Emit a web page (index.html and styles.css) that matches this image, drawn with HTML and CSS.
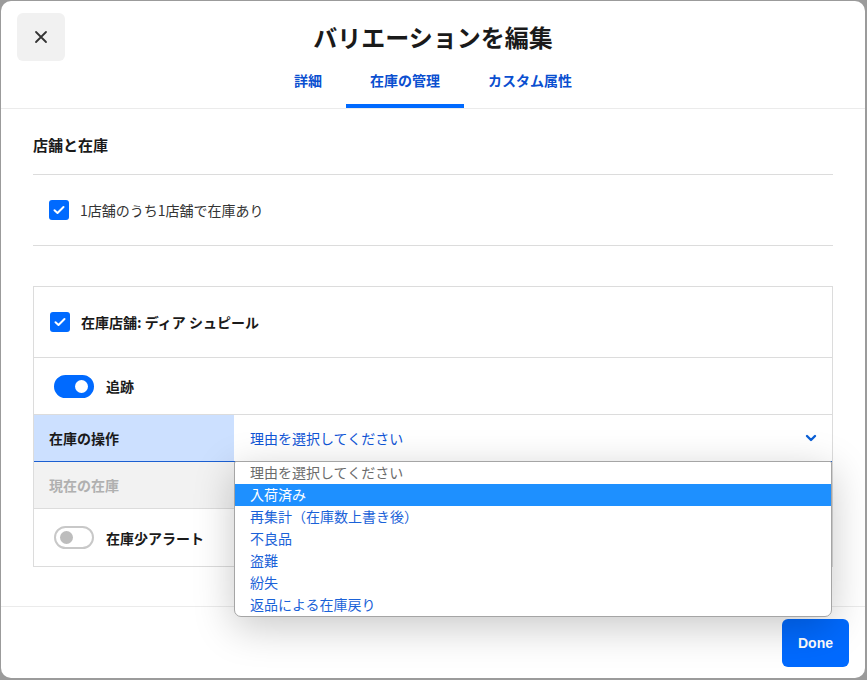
FILE: index.html
```html
<!DOCTYPE html>
<html lang="ja">
<head>
    <meta charset="UTF-8">
    <meta name="viewport" content="width=device-width, initial-scale=1.0">
    <title>バリエーションを編集</title>
    <link rel="stylesheet" href="styles.css">
</head>
<body>
    <div class="modal">
        <div class="modal-header">
            <div class="title-row">
                <button class="close-btn" aria-label="閉じる">
                    <svg width="14" height="14" viewBox="0 0 14 14"><path d="M2 2 L12 12 M12 2 L2 12" stroke="#333" stroke-width="1.8" stroke-linecap="round"/></svg>
                </button>
                <h1>バリエーションを編集</h1>
                <span></span>
            </div>
            <div class="tabs">
                <div class="tab">詳細</div>
                <div class="tab active">在庫の管理</div>
                <div class="tab">カスタム属性</div>
            </div>
        </div>

        <div class="modal-body">
            <h2 class="section-title">店舗と在庫</h2>
            <div class="check-row">
                <span class="checkbox">
                    <svg width="12" height="10" viewBox="0 0 12 10"><path d="M1.5 5.2 L4.5 8 L10.5 2" fill="none" stroke="#fff" stroke-width="2" stroke-linecap="round" stroke-linejoin="round"/></svg>
                </span>
                <span>1店舗のうち1店舗で在庫あり</span>
            </div>

            <div class="store-box">
                <div class="box-row store-row">
                    <span class="checkbox">
                        <svg width="12" height="10" viewBox="0 0 12 10"><path d="M1.5 5.2 L4.5 8 L10.5 2" fill="none" stroke="#fff" stroke-width="2" stroke-linecap="round" stroke-linejoin="round"/></svg>
                    </span>
                    <span class="bold">在庫店舗: ディア シュピール</span>
                </div>
                <div class="box-row toggle-row">
                    <span class="toggle on"><span class="knob"></span></span>
                    <span class="bold">追跡</span>
                </div>
                <div class="field-row active-field">
                    <div class="field-label">在庫の操作</div>
                    <div class="field-select">
                        <span>理由を選択してください</span>
                        <svg width="12" height="8" viewBox="0 0 12 8"><path d="M2 2 L6 6 L10 2" fill="none" stroke="#0a5fd6" stroke-width="2.4" stroke-linecap="round" stroke-linejoin="round"/></svg>
                        <ul class="dropdown">
                            <li class="placeholder">理由を選択してください</li>
                            <li class="selected">入荷済み</li>
                            <li>再集計（在庫数上書き後）</li>
                            <li>不良品</li>
                            <li>盗難</li>
                            <li>紛失</li>
                            <li>返品による在庫戻り</li>
                        </ul>
                    </div>
                </div>
                <div class="field-row disabled-field">
                    <div class="field-label">現在の在庫</div>
                    <div class="field-value"></div>
                </div>
                <div class="box-row toggle-row alert-row">
                    <span class="toggle"><span class="knob"></span></span>
                    <span class="bold">在庫少アラート</span>
                </div>
            </div>
        </div>

        <div class="modal-footer">
            <button class="done-btn">Done</button>
        </div>
    </div>
</body>
</html>
```

FILE: styles.css
```css
* {
    box-sizing: border-box;
}

body {
    margin: 0;
    background: #9b9b9b;
    font-family: "Noto Sans CJK JP", "Noto Sans", sans-serif;
    color: #1a1a1a;
}

.modal {
    margin: 1px 2px 2px 1px;
    height: 677px;
    background: #fff;
    border-radius: 10px;
    display: flex;
    flex-direction: column;
    overflow: hidden;
}

.modal-header {
    padding: 12px 16px 0;
    border-bottom: 1px solid #ebebeb;
}

.title-row {
    display: grid;
    grid-template-columns: 48px 1fr 48px;
    align-items: center;
}

.close-btn {
    width: 48px;
    height: 48px;
    border: none;
    border-radius: 6px;
    background: #f1f1f1;
    display: flex;
    align-items: center;
    justify-content: center;
    padding: 0;
}

h1 {
    margin: 0;
    text-align: center;
    font-size: 24px;
    line-height: 30px;
    font-weight: 700;
}

.tabs {
    display: flex;
    justify-content: center;
}

.tab {
    padding: 9px 24px 14px;
    font-size: 14px;
    line-height: 20px;
    font-weight: 700;
    color: #0a4fd0;
    border-bottom: 4px solid transparent;
}

.tab.active {
    border-bottom-color: #006aff;
}

.modal-body {
    flex: 1;
    padding: 0 32px;
}

.section-title {
    margin: 0;
    padding: 26px 0 19px;
    font-size: 15px;
    line-height: 20px;
    font-weight: 700;
    border-bottom: 1px solid #dcdcdc;
}

.check-row {
    height: 71px;
    display: flex;
    align-items: center;
    gap: 11px;
    padding-left: 16px;
    font-size: 14px;
    line-height: 18px;
    color: #333;
    border-bottom: 1px solid #dcdcdc;
}

.checkbox {
    width: 20px;
    height: 20px;
    border-radius: 3px;
    background: #006aff;
    display: flex;
    align-items: center;
    justify-content: center;
    flex-shrink: 0;
}

.bold {
    font-weight: 700;
}

.store-box {
    margin-top: 40px;
    border: 1px solid #dcdcdc;
    font-size: 14px;
    line-height: 18px;
}

.box-row {
    display: flex;
    align-items: center;
    border-bottom: 1px solid #dcdcdc;
}

.store-row {
    height: 71px;
    padding-left: 16px;
    gap: 11px;
}

.toggle-row {
    height: 57px;
    padding-left: 20px;
    gap: 12px;
}

.alert-row {
    height: 57px;
    border-bottom: none;
}

.toggle {
    width: 40px;
    height: 23px;
    border-radius: 12px;
    border: 2px solid #c8c8c8;
    background: #fff;
    display: flex;
    align-items: center;
    padding: 0 4px;
}

.toggle .knob {
    width: 13px;
    height: 13px;
    border-radius: 50%;
    background: #bdbdbd;
}

.toggle.on {
    background: #006aff;
    border-color: #006aff;
    justify-content: flex-end;
}

.toggle.on .knob {
    background: #fff;
}

.field-row {
    display: grid;
    grid-template-columns: 200px 1fr;
    height: 47px;
    border-bottom: 1px solid #dcdcdc;
}

.field-label {
    display: flex;
    align-items: center;
    padding-left: 15px;
    font-weight: 700;
}

.active-field {
    border-bottom-color: #1b5fd1;
}

.active-field .field-label {
    background: #cce0ff;
}

.field-select {
    position: relative;
    display: flex;
    align-items: center;
    justify-content: space-between;
    padding: 0 15px 0 16px;
    color: #1055d6;
}

.disabled-field {
    background: #f2f2f2;
}

.disabled-field .field-label {
    color: #b0b0b0;
}

.dropdown {
    position: absolute;
    top: 46px;
    left: 0;
    right: 0;
    margin: 0;
    padding: 0;
    list-style: none;
    background: #fff;
    border: 1px solid #a5a5a5;
    border-radius: 2px 2px 7px 7px;
    box-shadow: 0 10px 40px rgba(0, 0, 0, 0.22);
    z-index: 5;
}

.dropdown li {
    height: 22px;
    line-height: 20px;
    padding-left: 15px;
    font-size: 14px;
    color: #1a62d8;
}

.dropdown li.placeholder {
    color: #6b6b6b;
}

.dropdown li.selected {
    background: #1e90ff;
    color: #fff;
}

.modal-footer {
    height: 72px;
    border-top: 1px solid #ebebeb;
    display: flex;
    justify-content: flex-end;
    align-items: center;
    padding: 0 16px;
}

.done-btn {
    width: 67px;
    height: 48px;
    border: none;
    border-radius: 6px;
    background: #006aff;
    color: #fff;
    font-family: "Liberation Sans", "Noto Sans", sans-serif;
    font-size: 14px;
    font-weight: 700;
}
```
